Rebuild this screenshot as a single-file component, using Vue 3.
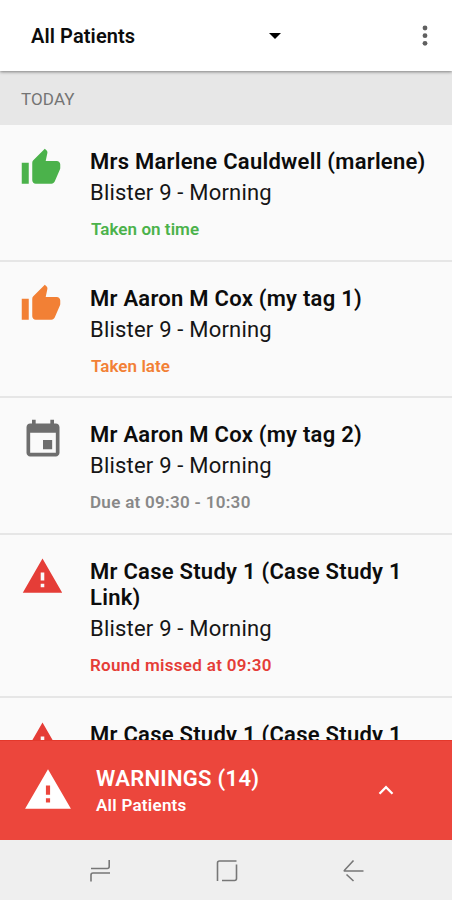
<script setup>
import { ref } from "vue";
const icons = {
	thumb: 'M1 21h4V9H1v12zm22-11c0-1.1-.9-2-2-2h-6.31l.95-4.57.03-.32c0-.41-.17-.79-.44-1.06L14.17 1 7.59 7.59C7.22 7.95 7 8.45 7 9v10c0 1.1.9 2 2 2h9c.83 0 1.54-.5 1.84-1.22l3.02-7.05c.09-.23.14-.47.14-.73v-2z',
	event: 'M17 12h-5v5h5v-5zM16 1v2H8V1H6v2H5c-1.11 0-1.99.9-1.99 2L3 19c0 1.1.89 2 2 2h14c1.1 0 2-.9 2-2V5c0-1.1-.9-2-2-2h-1V1h-2zm3 18H5V8h14v11z',
	warning: 'M1 21h22L12 2 1 21zm12-3h-2v-2h2v2zm0-3.7h-2v-4.5h2v4.5z',
};
const rounds = ref([
	{ name: 'Mrs Marlene Cauldwell (marlene)', blister: 'Blister 9 - Morning', icon: 'thumb', type: 'taken', status: 'Taken on time' },
	{ name: 'Mr Aaron M Cox (my tag 1)', blister: 'Blister 9 - Morning', icon: 'thumb', type: 'late', status: 'Taken late' },
	{ name: 'Mr Aaron M Cox (my tag 2)', blister: 'Blister 9 - Morning', icon: 'event', type: 'due', status: 'Due at 09:30 - 10:30' },
	{ name: 'Mr Case Study 1 (Case Study 1 Link)', blister: 'Blister 9 - Morning', icon: 'warning', type: 'missed', status: 'Round missed at 09:30' },
	{ name: 'Mr Case Study 1 (Case Study 1', icon: 'warning', type: 'missed' },
]);
</script>
<template>
	<div class="page">
		<header class="header">
			<span class="filter">All Patients</span>
			<svg class="caret" viewBox="0 0 12 6"><path d="M0 0h12L6 6z" /></svg>
			<svg class="more" viewBox="0 0 8 22">
				<circle cx="4" cy="3" r="2.4" />
				<circle cx="4" cy="10.7" r="2.4" />
				<circle cx="4" cy="18.3" r="2.4" />
			</svg>
		</header>
		<div class="section">TODAY</div>
		<main class="list">
			<div v-for="(item, index) in rounds" :key="index" class="item" :class="item.type">
				<svg class="icon" viewBox="0 0 24 24"><path :d="icons[item.icon]" /></svg>
				<div class="info">
					<div class="name">{{ item.name }}</div>
					<div v-if="item.blister" class="blister">{{ item.blister }}</div>
					<div v-if="item.status" class="status">{{ item.status }}</div>
				</div>
			</div>
		</main>
		<div class="warnings">
			<svg class="warnings-icon" viewBox="0 0 24 24"><path :d="icons.warning" /></svg>
			<div class="warnings-text">
				<div class="warnings-title">WARNINGS (14)</div>
				<div class="warnings-sub">All Patients</div>
			</div>
			<svg class="chevron" viewBox="0 0 16 10"><path d="M1.5 8.7L8 2.2l6.5 6.5" /></svg>
		</div>
		<nav class="nav">
			<svg viewBox="0 0 24 24"><path d="M21.2 1v6.5q0 2-2 2H3M22 14H5q-2 0-2 2v6.5" /></svg>
			<svg viewBox="0 0 24 24"><path d="M2.5 22V4q0-2 2-2H21.5M21.5 5.5v14q0 2-2 2H7" /></svg>
			<svg viewBox="0 0 24 24"><path d="M12.5 1.5L3.5 11.2q-.8.8.5.8H22.5M5.5 15.5l7 6.5" /></svg>
		</nav>
	</div>
</template>
<style>
body {
	margin: 0;
}
</style>
<style scoped>
.page {
	display: flex;
	flex-direction: column;
	height: 900px;
	overflow: hidden;
	background-color: #fafafa;
	font-family: Roboto, "Liberation Sans", sans-serif;
	color: #0c0c0c;
}
.header {
	flex: none;
	display: flex;
	align-items: center;
	box-sizing: border-box;
	height: 71px;
	padding: 1px 23px 0 31px;
	background-color: #fff;
	box-shadow: 0 1px 3px rgba(0, 0, 0, 0.45);
	z-index: 1;
}
.filter {
	width: 238px;
	font-size: 20px;
	font-weight: 600;
	letter-spacing: 0.1px;
}
.caret {
	width: 12px;
	height: 6px;
}
.more {
	width: 8px;
	height: 22px;
	margin-left: auto;
	fill: #606060;
}
.section {
	flex: none;
	height: 54px;
	padding-left: 21px;
	background-color: #e7e7e7;
	color: #747474;
	font-size: 17px;
	line-height: 56px;
	letter-spacing: 0.1px;
}
.list {
	flex: 1;
	min-height: 0;
	overflow: hidden;
}
.item {
	display: flex;
	box-sizing: border-box;
	padding: 24px 20px 20.5px;
	border-bottom: 2px solid #e6e6e6;
}
.icon {
	flex: none;
	width: 42px;
	height: 42px;
	margin-top: -2.5px;
	margin-right: 28px;
	fill: currentColor;
}
.info {
	flex: 1;
}
.name {
	font-size: 22px;
	font-weight: 600;
	line-height: 26px;
	letter-spacing: 0.26px;
	color: #0c0c0c;
}
.blister {
	margin-top: 4px;
	font-size: 22px;
	line-height: 27px;
	letter-spacing: 0.2px;
	color: #151515;
}
.status {
	margin-top: 13px;
	font-size: 17px;
	font-weight: 600;
	line-height: 20px;
	letter-spacing: 0.3px;
}
.taken {
	color: #4bb24b;
}
.late {
	color: #f28035;
}
.taken .status,
.late .status {
	padding-left: 1px;
	letter-spacing: 0.05px;
}
.due {
	color: #6e6e6e;
}
.due .icon {
	width: 44px;
	height: 44px;
	margin: -4px 25.5px 0 0.5px;
}
.due .status {
	color: #888;
}
.missed {
	padding-bottom: 21.5px;
	color: #e53d37;
}
.missed .icon {
	width: 43px;
	height: 43px;
	margin: -3.5px 26px 0 1px;
}
.warnings {
	flex: none;
	display: flex;
	align-items: center;
	box-sizing: border-box;
	height: 100px;
	padding: 0 58px 0 23px;
	background-color: #ec463c;
	border-top: 1px solid #e4382b;
	color: #fff;
}
.warnings-icon {
	width: 50px;
	height: 50px;
	margin-top: -2px;
	margin-right: 23px;
	fill: #fff;
}
.warnings-text {
	padding-top: 2px;
}
.warnings-title {
	font-size: 22px;
	font-weight: 600;
	line-height: 28px;
	letter-spacing: 0.3px;
}
.warnings-sub {
	font-size: 17px;
	font-weight: 600;
	line-height: 25px;
	letter-spacing: 0.25px;
}
.chevron {
	width: 16px;
	height: 10px;
	margin-left: auto;
	margin-top: -2px;
	fill: none;
	stroke: #fff;
	stroke-width: 2.3;
}
.nav {
	flex: none;
	display: flex;
	justify-content: space-between;
	align-items: center;
	box-sizing: border-box;
	height: 60px;
	padding: 2px 87px 0 88px;
	background-color: #efefef;
}
.nav svg {
	width: 24px;
	height: 24px;
	fill: none;
	stroke: #777;
	stroke-width: 1.6;
}
</style>
